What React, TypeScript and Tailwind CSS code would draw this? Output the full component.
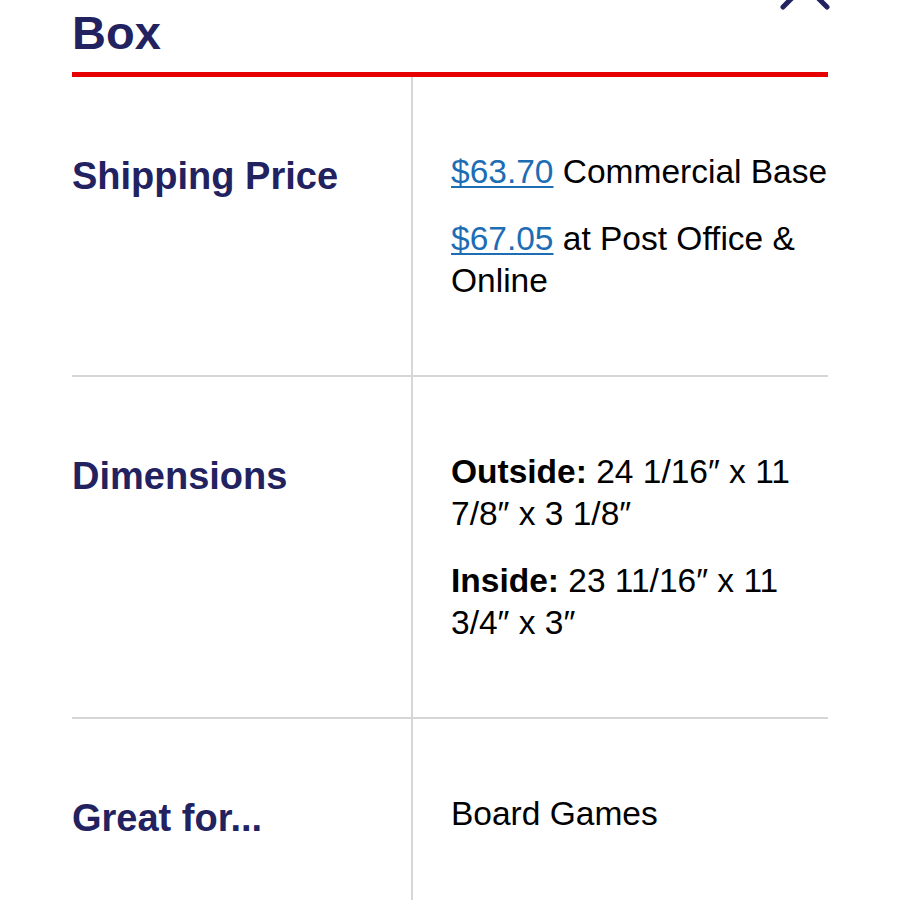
import React from "react";

interface SpecRow {
  label: string;
  content: React.ReactNode;
}

const Price: React.FC<{ amount: string }> = ({ amount }) => (
  <a href="#" className="text-[#1d6db4] underline underline-offset-[3px] decoration-[2px]">
    {amount}
  </a>
);

const rows: SpecRow[] = [
  {
    label: "Shipping Price",
    content: (
      <>
        <p>
          <Price amount="$63.70" /> Commercial Base
        </p>
        <p className="mt-[25px]">
          <Price amount="$67.05" /> at Post Office &amp; Online
        </p>
      </>
    ),
  },
  {
    label: "Dimensions",
    content: (
      <>
        <p>
          <span className="font-bold">Outside:</span> 24 1/16″ x 11 7/8″ x 3 1/8″
        </p>
        <p className="mt-[25px]">
          <span className="font-bold">Inside:</span> 23 11/16″ x 11 3/4″ x 3″
        </p>
      </>
    ),
  },
  {
    label: "Great for...",
    content: <p>Board Games</p>,
  },
];

const App: React.FC = () => {
  return (
    <div className="relative min-h-[900px] w-full overflow-hidden bg-white px-[72px] font-['Liberation_Sans',Arial,sans-serif]">
      {/* Close button, mostly scrolled off the top */}
      <button className="absolute right-[70px] top-[-40px] text-[#222260]" aria-label="Close">
        <svg width="50" height="50" viewBox="0 0 50 50" fill="none">
          <path
            d="M3 3 L47 47 M47 3 L3 47"
            stroke="currentColor"
            strokeWidth="5"
            strokeLinecap="round"
          />
        </svg>
      </button>

      <h1 className="mt-[10px] text-[47px] font-bold leading-[46px] text-[#222260]">Box</h1>
      <div className="mt-[16px] h-[5px] w-full bg-[#e60000]" />

      <div className="flex flex-col">
        {rows.map((row, i) => (
          <div
            key={row.label}
            className={`grid grid-cols-[341px_1fr] ${
              i < rows.length - 1 ? "border-b-2 border-[#d6d6d6]" : ""
            }`}
          >
            <div className="border-r-2 border-[#d6d6d6] pt-[74px] pb-[74px]">
              <h3 className="text-[38px] font-bold leading-[50px] text-[#222260]">
                {row.label}
              </h3>
            </div>
            <div className="pl-[38px] pt-[74px] pb-[73px] text-[33.5px] leading-[42px] text-black">
              {row.content}
            </div>
          </div>
        ))}
      </div>
    </div>
  );
};

export default App;
